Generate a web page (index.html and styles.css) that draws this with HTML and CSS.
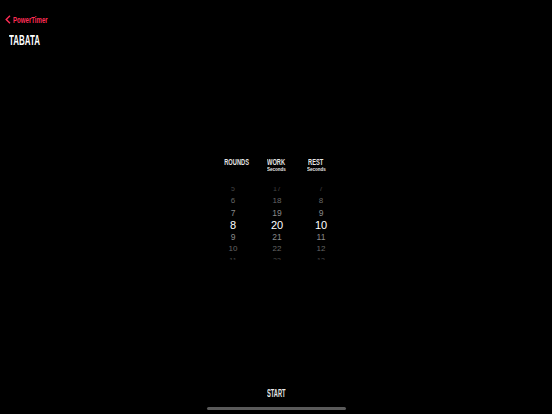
FILE: index.html
```html
<!DOCTYPE html>
<html lang="en">
<head>
  <meta charset="UTF-8" />
  <meta name="viewport" content="width=device-width, initial-scale=1.0"/>
  <title>PowerTimer - Tabata</title>
  <link rel="stylesheet" href="styles.css">
</head>
<body>

<div class="screen">
  <div class="nav">
    <a class="back" href="#">
      <svg width="6" height="9" viewBox="0 0 6 9"><path d="M5 0.8 L1.2 4.5 L5 8.2" fill="none" stroke="#ff2d55" stroke-width="1.4"/></svg>
      <span class="narrow">PowerTimer</span>
    </a>
  </div>
  <h1 class="title"><span class="narrow">TABATA</span></h1>

  <div class="setup">
    <div class="heads">
      <div class="head"><span class="narrow">ROUNDS</span></div>
      <div class="head"><span class="narrow">WORK</span><small>Seconds</small></div>
      <div class="head"><span class="narrow">REST</span><small>Seconds</small></div>
    </div>

    <div class="picker">
      <ul class="wheel">
        <li class="r3">5</li>
        <li class="r2">6</li>
        <li class="r1">7</li>
        <li class="sel">8</li>
        <li class="r1">9</li>
        <li class="r2">10</li>
        <li class="r3">11</li>
      </ul>
      <ul class="wheel">
        <li class="r3">17</li>
        <li class="r2">18</li>
        <li class="r1">19</li>
        <li class="sel">20</li>
        <li class="r1">21</li>
        <li class="r2">22</li>
        <li class="r3">23</li>
      </ul>
      <ul class="wheel">
        <li class="r3">7</li>
        <li class="r2">8</li>
        <li class="r1">9</li>
        <li class="sel">10</li>
        <li class="r1">11</li>
        <li class="r2">12</li>
        <li class="r3">13</li>
      </ul>
    </div>
  </div>

  <div class="footer">
    <button class="start"><span class="narrow">START</span></button>
    <div class="home-bar"></div>
  </div>
</div>

</body>
</html>
```

FILE: styles.css
```css
html, body {
  margin: 0;
  padding: 0;
  background: #000;
}

.screen {
  width: 552px;
  height: 414px;
  display: flex;
  flex-direction: column;
  font-family: "Liberation Sans", Arial, sans-serif;
  color: #fff;
  overflow: hidden;
}

/* condensed display face, squeezed from Liberation Sans Bold */
.narrow {
  display: inline-block;
  font-weight: bold;
  transform: scaleX(0.6);
  white-space: nowrap;
}

.nav {
  padding: 14px 0 0 5px;
  height: 11px;
}

.back {
  display: flex;
  align-items: center;
  text-decoration: none;
  color: #ff2d55;
  font-size: 9.5px;
  line-height: 11px;
}

.back .narrow {
  transform: scaleX(0.64);
  transform-origin: left center;
  margin-left: 2px;
}

.title {
  margin: 7px 0 0 9px;
  font-size: 15px;
  line-height: 15px;
}

.title .narrow {
  transform: scaleX(0.53);
  transform-origin: left center;
}

.setup {
  margin-top: 110px;
  display: flex;
  flex-direction: column;
  align-items: center;
}

.heads {
  display: flex;
}

.head {
  width: 40px;
  display: flex;
  flex-direction: column;
  align-items: center;
  font-size: 9.5px;
  line-height: 9px;
  color: #e6e6e6;
}

.head:first-child {
  margin-left: 1px;
  margin-right: -1px;
}

.head small {
  margin-top: 1px;
  font-size: 5px;
  font-weight: bold;
  line-height: 5px;
  transform: scaleX(0.9);
}

.picker {
  display: flex;
  margin-top: 15px;
  margin-left: 2px;
  height: 73px;
  overflow: hidden;
}

.wheel {
  list-style: none;
  margin: -4px 0 0 0;
  padding: 0;
  width: 44px;
  text-align: center;
}

.wheel li {
  height: 12px;
  line-height: 12px;
  font-size: 8.5px;
}

.wheel .sel {
  font-size: 11px;
  color: #fff;
}

.wheel .r1 {
  color: #8a8a8a;
}

.wheel .r2 {
  color: #666;
  font-size: 8px;
}

.wheel .r3 {
  color: #444;
  font-size: 7px;
}

.footer {
  margin-top: auto;
  display: flex;
  flex-direction: column;
  align-items: center;
}

.start {
  background: none;
  border: none;
  color: #e6e6e6;
  font-family: inherit;
  font-size: 10px;
  line-height: 10px;
  padding: 0;
  margin-bottom: 8px;
  cursor: pointer;
}

.start .narrow {
  transform: scaleX(0.57);
}

.home-bar {
  width: 139px;
  height: 3px;
  border-radius: 2px;
  background: #5a5a5a;
  margin-bottom: 4px;
}
```
